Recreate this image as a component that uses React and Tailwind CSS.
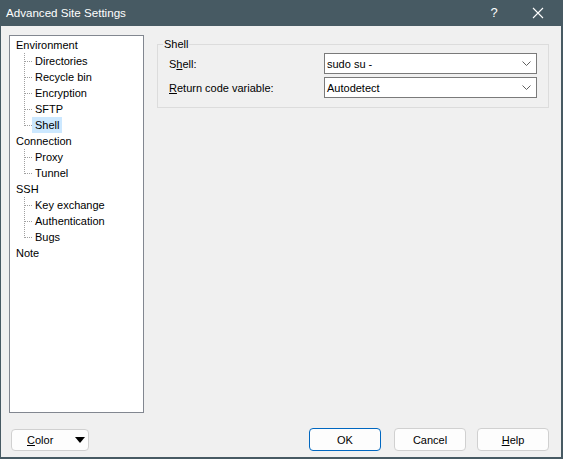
const font = { fontFamily: '"Liberation Sans", Arial, sans-serif' };

const tree = [
  { label: "Environment", children: ["Directories", "Recycle bin", "Encryption", "SFTP", "Shell"] },
  { label: "Connection", children: ["Proxy", "Tunnel"] },
  { label: "SSH", children: ["Key exchange", "Authentication", "Bugs"] },
  { label: "Note", children: [] },
];

// dotted connector of a tree child row
function Connector({ last }) {
  return (
    <svg width="8" height="16" className="shrink-0">
      <line x1="0.5" y1="0" x2="0.5" y2={last ? 9 : 16} stroke="#a0a0a0" strokeDasharray="1 1" />
      <line x1="1" y1="8.5" x2="8" y2="8.5" stroke="#a0a0a0" strokeDasharray="1 1" />
    </svg>
  );
}

function Combo({ value }) {
  return (
    <div className="w-[213px] h-[21px] bg-white border border-[#7a7a7a] flex items-center justify-between pl-[2px] pr-[5px]">
      <span>{value}</span>
      <svg width="9" height="5" viewBox="0 0 9 5">
        <polyline points="0.5,0.5 4.5,4.5 8.5,0.5" fill="none" stroke="#606060" strokeWidth="1" />
      </svg>
    </div>
  );
}

function Button({ children, primary, className }) {
  return (
    <button
      className={
        "h-[23px] w-[72px] rounded-[4px] bg-[#fdfdfd] flex items-center justify-center text-black " +
        (primary ? "border border-[#0067c0] " : "border border-[#d0d0d0] ") +
        (className || "")
      }
    >
      {children}
    </button>
  );
}

export default function App() {
  return (
    <div style={font} className="w-[563px] h-[459px] bg-[#f0f0f0] flex flex-col border-l border-r-2 border-b-2 border-[#475a63] text-[11px] text-black leading-[16px]">
      {/* title bar */}
      <div className="h-[26px] bg-[#475a63] flex items-center text-white shrink-0 -ml-px -mr-[2px]">
        <span className="pl-[6px] text-[11.6px] flex-1">Advanced Site Settings</span>
        <span className="w-[20px] text-center text-[13px] mr-[28px]">?</span>
        <svg width="12" height="12" viewBox="0 0 12 12" className="mr-[19px]">
          <path d="M1 1 L11 11 M11 1 L1 11" stroke="white" strokeWidth="1.1" />
        </svg>
      </div>

      <div className="flex pt-[9px] pl-[8px]">
        {/* tree */}
        <div className="w-[135px] h-[378px] bg-white border border-[#828790] pt-px pl-[6px]">
          {tree.map((node) => (
            <div key={node.label}>
              <div className="h-[16px] flex items-center">{node.label}</div>
              {node.children.map((c, i) => (
                <div key={c} className="h-[16px] flex items-center pl-[8px]">
                  <Connector last={i === node.children.length - 1} />
                  <span className={"px-[3px] h-[16px] flex items-center " + (c === "Shell" && node.label === "Environment" ? "bg-[#cce8ff]" : "")}>
                    {c}
                  </span>
                </div>
              ))}
            </div>
          ))}
        </div>

        {/* group box */}
        <fieldset className="ml-[13px] mt-[2px] w-[392px] h-[71px] border border-[#dcdcdc]">
          <legend className="ml-[5px] px-px leading-[14px]">Shell</legend>
          <div className="flex flex-col gap-[3px] pt-[2px] px-[11px]">
            <div className="flex items-center justify-between">
              <span>
                S<span className="underline">h</span>ell:
              </span>
              <Combo value="sudo su -" />
            </div>
            <div className="flex items-center justify-between">
              <span>
                <span className="underline">R</span>eturn code variable:
              </span>
              <Combo value="Autodetect" />
            </div>
          </div>
        </fieldset>
      </div>

      {/* bottom buttons */}
      <div className="flex items-center mt-[15px] pl-[10px]">
        <button className="h-[22px] w-[78px] rounded-[4px] bg-[#fdfdfd] border border-[#d0d0d0] flex items-center pl-[15px] pr-[3px] justify-between">
          <span>
            <span className="underline">C</span>olor
          </span>
          <svg width="10" height="6" viewBox="0 0 10 6">
            <path d="M0 0 L10 0 L5 6 Z" fill="black" />
          </svg>
        </button>
        <div className="flex-1" />
        <Button primary>OK</Button>
        <Button className="ml-[13px]">Cancel</Button>
        <Button className="ml-[11px] mr-[12px]">
          <span>
            <span className="underline">H</span>elp
          </span>
        </Button>
      </div>
    </div>
  );
}
